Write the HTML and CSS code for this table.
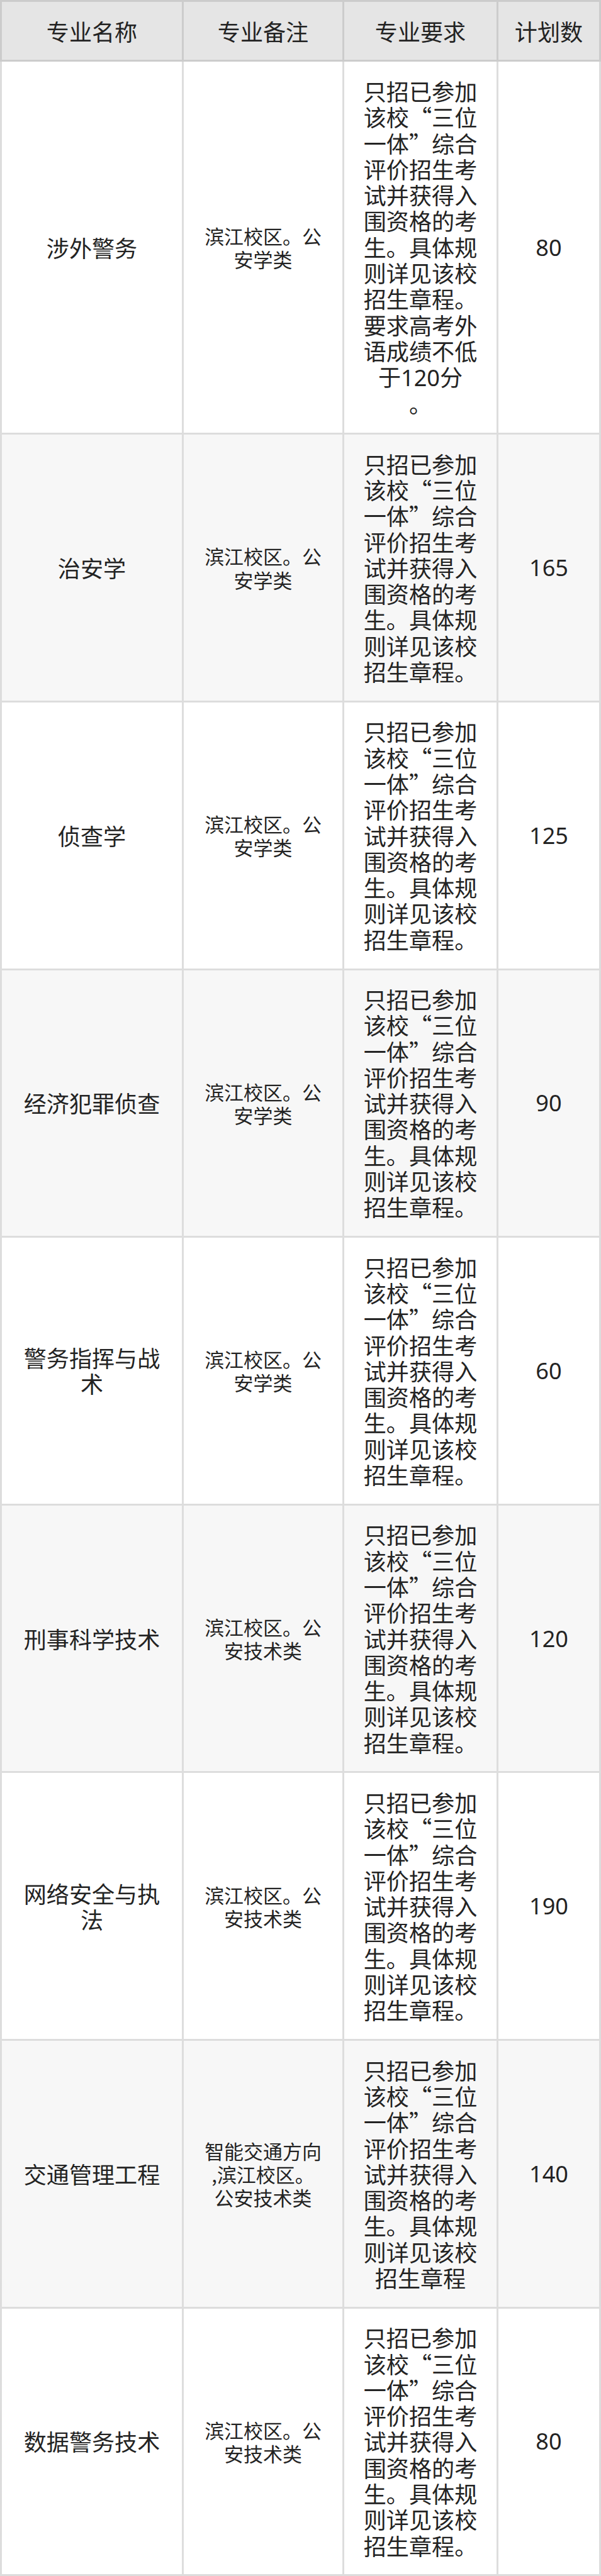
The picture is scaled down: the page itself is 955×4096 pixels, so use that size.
FILE: index.html
```html
<!DOCTYPE html>
<html lang="zh-CN">
<head>
<meta charset="utf-8">
<title>专业计划</title>
<link rel="stylesheet" href="styles.css">
</head>
<body>
<div class="table">
  <div class="row head">
    <div class="cell first"><div class="txt">专业名称</div></div>
    <div class="cell"><div class="txt">专业备注</div></div>
    <div class="cell"><div class="txt">专业要求</div></div>
    <div class="cell"><div class="txt">计划数</div></div>
  </div>

  <div class="row">
    <div class="cell first"><div class="txt">涉外警务</div></div>
    <div class="cell note"><div class="txt">滨江校区。公<br>安学类</div></div>
    <div class="cell"><div class="txt">只招已参加<br>该校“三位<br>一体”综合<br>评价招生考<br>试并获得入<br>围资格的考<br>生。具体规<br>则详见该校<br>招生章程。<br>要求高考外<br>语成绩不低<br>于<span class="num">120</span>分<br>。</div></div>
    <div class="cell"><div class="txt num">80</div></div>
  </div>

  <div class="row alt">
    <div class="cell first"><div class="txt">治安学</div></div>
    <div class="cell note"><div class="txt">滨江校区。公<br>安学类</div></div>
    <div class="cell"><div class="txt">只招已参加<br>该校“三位<br>一体”综合<br>评价招生考<br>试并获得入<br>围资格的考<br>生。具体规<br>则详见该校<br>招生章程。</div></div>
    <div class="cell"><div class="txt num">165</div></div>
  </div>

  <div class="row">
    <div class="cell first"><div class="txt">侦查学</div></div>
    <div class="cell note"><div class="txt">滨江校区。公<br>安学类</div></div>
    <div class="cell"><div class="txt">只招已参加<br>该校“三位<br>一体”综合<br>评价招生考<br>试并获得入<br>围资格的考<br>生。具体规<br>则详见该校<br>招生章程。</div></div>
    <div class="cell"><div class="txt num">125</div></div>
  </div>

  <div class="row alt">
    <div class="cell first"><div class="txt">经济犯罪侦查</div></div>
    <div class="cell note"><div class="txt">滨江校区。公<br>安学类</div></div>
    <div class="cell"><div class="txt">只招已参加<br>该校“三位<br>一体”综合<br>评价招生考<br>试并获得入<br>围资格的考<br>生。具体规<br>则详见该校<br>招生章程。</div></div>
    <div class="cell"><div class="txt num">90</div></div>
  </div>

  <div class="row">
    <div class="cell first"><div class="txt">警务指挥与战<br>术</div></div>
    <div class="cell note"><div class="txt">滨江校区。公<br>安学类</div></div>
    <div class="cell"><div class="txt">只招已参加<br>该校“三位<br>一体”综合<br>评价招生考<br>试并获得入<br>围资格的考<br>生。具体规<br>则详见该校<br>招生章程。</div></div>
    <div class="cell"><div class="txt num">60</div></div>
  </div>

  <div class="row alt">
    <div class="cell first"><div class="txt">刑事科学技术</div></div>
    <div class="cell note"><div class="txt">滨江校区。公<br>安技术类</div></div>
    <div class="cell"><div class="txt">只招已参加<br>该校“三位<br>一体”综合<br>评价招生考<br>试并获得入<br>围资格的考<br>生。具体规<br>则详见该校<br>招生章程。</div></div>
    <div class="cell"><div class="txt num">120</div></div>
  </div>

  <div class="row">
    <div class="cell first"><div class="txt">网络安全与执<br>法</div></div>
    <div class="cell note"><div class="txt">滨江校区。公<br>安技术类</div></div>
    <div class="cell"><div class="txt">只招已参加<br>该校“三位<br>一体”综合<br>评价招生考<br>试并获得入<br>围资格的考<br>生。具体规<br>则详见该校<br>招生章程。</div></div>
    <div class="cell"><div class="txt num">190</div></div>
  </div>

  <div class="row alt">
    <div class="cell first"><div class="txt">交通管理工程</div></div>
    <div class="cell note"><div class="txt">智能交通方向<br>,滨江校区。<br>公安技术类</div></div>
    <div class="cell"><div class="txt">只招已参加<br>该校“三位<br>一体”综合<br>评价招生考<br>试并获得入<br>围资格的考<br>生。具体规<br>则详见该校<br>招生章程</div></div>
    <div class="cell"><div class="txt num">140</div></div>
  </div>

  <div class="row">
    <div class="cell first"><div class="txt">数据警务技术</div></div>
    <div class="cell note"><div class="txt">滨江校区。公<br>安技术类</div></div>
    <div class="cell"><div class="txt">只招已参加<br>该校“三位<br>一体”综合<br>评价招生考<br>试并获得入<br>围资格的考<br>生。具体规<br>则详见该校<br>招生章程。</div></div>
    <div class="cell"><div class="txt num">80</div></div>
  </div>
</div>
</body>
</html>
```

FILE: styles.css
```css
html, body {
  margin: 0;
  padding: 0;
  background: #ffffff;
}

.table {
  display: grid;
  grid-template-columns: 292px 255px 245px 163px;
  width: 955px;
  font-family: "Noto Sans CJK SC", sans-serif;
  color: #232323;
}

.row {
  display: contents;
}

.cell {
  box-sizing: border-box;
  display: flex;
  align-items: center;
  justify-content: center;
  text-align: center;
  padding: 25.57px 4px;
  font-size: 36.12px;
  line-height: 41.28px;
  white-space: nowrap;
  border-right: 3px solid #dddddd;
  border-bottom: 3px solid #dddddd;
  background: #ffffff;
}

.cell.first {
  border-left: 3px solid #dddddd;
}

.head .cell {
  background: #e5e5e5;
  border-color: #cccccc;
  border-top: 3px solid #cccccc;
}

.alt .cell {
  background: #f7f7f7;
}

.cell.note {
  font-size: 30.96px;
  line-height: 37.2px;
}

.num {
  font-family: "Noto Sans", "Noto Sans CJK SC", sans-serif;
}
```
